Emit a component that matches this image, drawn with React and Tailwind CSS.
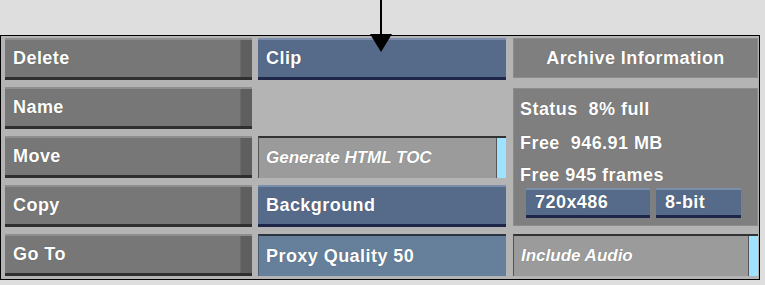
const font = { fontFamily: '"Liberation Sans", Arial, sans-serif' };

const textClass =
  "text-[18px] font-bold tracking-[0.45px] text-white [text-shadow:0_0_1px_rgba(0,0,0,0.35)]";

function GrayButton({ label }) {
  return (
    <div className="flex h-full border-t-2 border-b-[3px] border-t-[#8e8e8e] border-b-[#2f2f2f] bg-[#777777]">
      <div className={`flex flex-1 items-center pl-[8px] ${textClass}`}>{label}</div>
      <div className="w-[12px] border-l border-l-[#6a6a6a] bg-[#5f5f5f]" />
    </div>
  );
}

function BlueButton({ label }) {
  return (
    <div
      className={`flex h-full items-center border-t-2 border-b-[3px] border-t-[#7a8dab] border-b-[#1e2748] bg-[#566a89] pl-[8px] ${textClass}`}
    >
      {label}
    </div>
  );
}

function ToggleField({ label }) {
  return (
    <div className="flex h-full border-t-2 border-l border-t-[#333333] border-l-[#555555] bg-[#9b9b9b]">
      <div className="flex flex-1 items-center pl-[7px] text-[17px] font-bold italic text-white [text-shadow:0_0_1px_rgba(0,0,0,0.3)]">
        {label}
      </div>
      <div className="w-[10px] border-l border-l-[#555555] bg-[#9ee2ff]" />
    </div>
  );
}

function ArrowMarker() {
  return (
    <svg
      className="absolute left-[369px] top-0"
      width="24"
      height="54"
      viewBox="0 0 24 54"
      aria-hidden
    >
      <line x1="12" y1="0" x2="12" y2="36" stroke="#000" strokeWidth="2" />
      <path d="M1 34 L23 34 L12 52 Z" fill="#000" />
    </svg>
  );
}

export default function App() {
  return (
    <div className="relative h-[285px] w-[765px] overflow-hidden bg-[#dedede]" style={font}>
      <div className="mt-[35px] w-[760px] border border-black bg-[#b4b4b4] pt-[2px] pb-[3px] pl-[4px]">
        <div className="grid grid-cols-[247px_248px_246px] grid-rows-[repeat(5,42px)] gap-x-[6px] gap-y-[7px]">
          {/* left column */}
          <div className="col-start-1 row-start-1"><GrayButton label="Delete" /></div>
          <div className="col-start-1 row-start-2"><GrayButton label="Name" /></div>
          <div className="col-start-1 row-start-3"><GrayButton label="Move" /></div>
          <div className="col-start-1 row-start-4"><GrayButton label="Copy" /></div>
          <div className="col-start-1 row-start-5"><GrayButton label="Go To" /></div>

          {/* middle column */}
          <div className="col-start-2 row-start-1"><BlueButton label="Clip" /></div>
          <div className="col-start-2 row-start-3"><ToggleField label="Generate HTML TOC" /></div>
          <div className="col-start-2 row-start-4"><BlueButton label="Background" /></div>
          <div className="col-start-2 row-start-5">
            <div className={`flex h-full items-center border-t-2 border-l border-t-[#2c3440] border-l-[#4a5a6e] bg-[#66809b] pl-[7px] ${textClass}`}>
              Proxy Quality 50
            </div>
          </div>

          {/* right column */}
          <div className="col-start-3 row-start-1 ml-[1px] mb-[2px]">
            <div className={`flex h-full items-center justify-center border border-[#8c8c8c] bg-[#7f7f7f] ${textClass}`}>
              Archive Information
            </div>
          </div>
          <div className="col-start-3 row-start-2 row-span-3 ml-[1px] mt-[1px] mb-[1px]">
            <div className={`flex h-full flex-col border border-[#8c8c8c] bg-[#7f7f7f] px-[6px] pt-[7px] ${textClass}`}>
              <div className="h-[34px]">Status&nbsp; 8% full</div>
              <div className="h-[32px]">Free&nbsp; 946.91 MB</div>
              <div className="h-[26px]">Free 945 frames</div>
              <div className="flex gap-[6px] pl-[6px]">
                <div className="flex h-[30px] w-[124px] items-center border-t-2 border-b-[3px] border-t-[#7a8dab] border-b-[#1e2748] bg-[#566a89] pl-[9px]">
                  720x486
                </div>
                <div className="flex h-[30px] w-[85px] items-center border-t-2 border-b-[3px] border-t-[#7a8dab] border-b-[#1e2748] bg-[#566a89] pl-[9px]">
                  8-bit
                </div>
              </div>
            </div>
          </div>
          <div className="col-start-3 row-start-5 ml-[1px]"><ToggleField label="Include Audio" /></div>
        </div>
      </div>
      <ArrowMarker />
    </div>
  );
}
